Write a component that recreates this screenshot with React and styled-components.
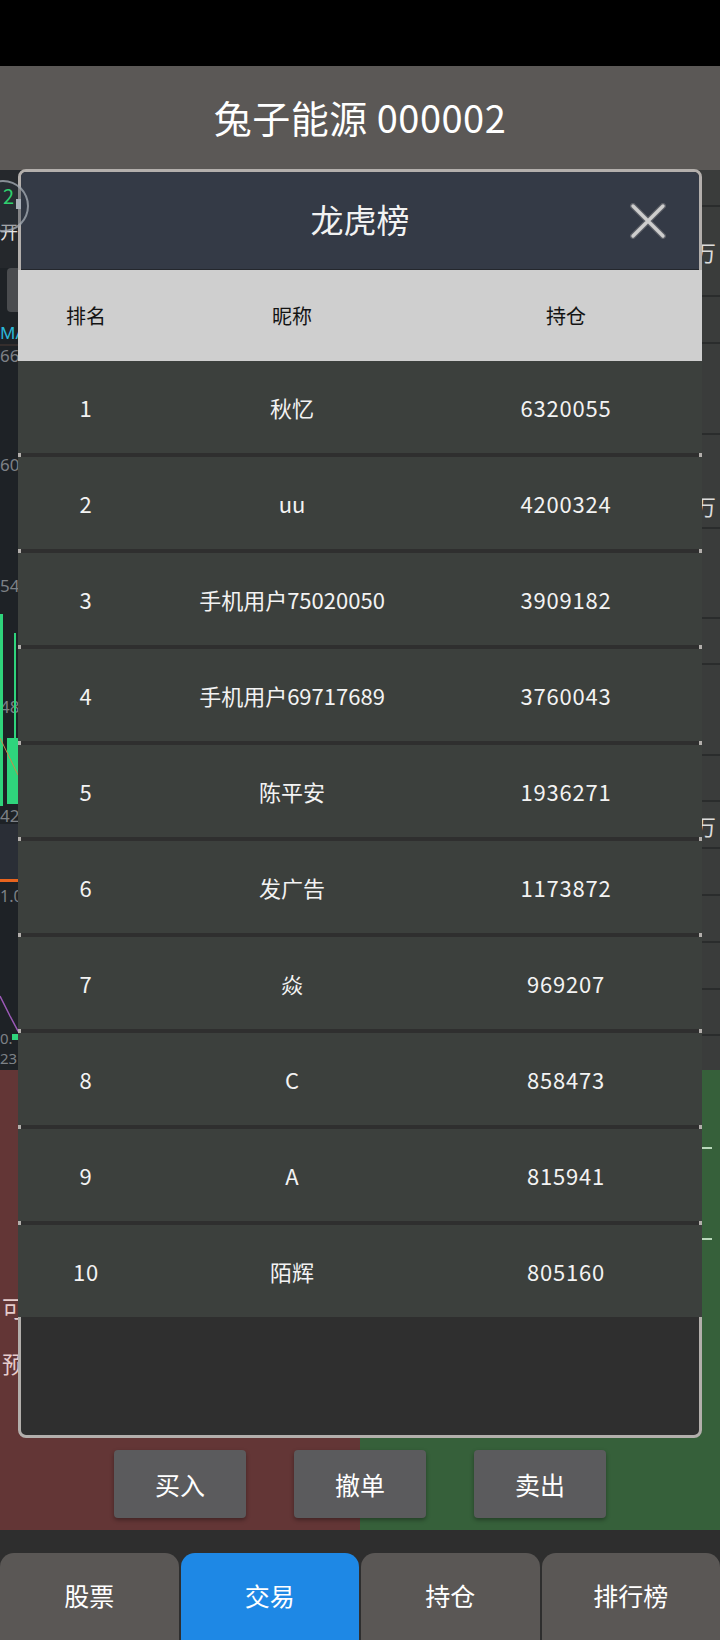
import React from "react";
import styled, { createGlobalStyle } from "styled-components";

const Global = createGlobalStyle`
  html, body { margin: 0; padding: 0; background: #000; }
  body { font-family: "Noto Sans CJK SC", "Noto Sans", sans-serif; }
  * { box-sizing: border-box; }
`;

const Page = styled.div`
  position: relative;
  width: 720px;
  height: 1640px;
  overflow: hidden;
  display: flex;
  flex-direction: column;
  background: #2e2e2e;
`;

const StatusBar = styled.div`
  height: 66px;
  background: #000;
  flex: none;
`;

const TitleBar = styled.div`
  height: 104px;
  flex: none;
  background: #5b5856;
  color: #fff;
  font-size: 38px;
  display: flex;
  align-items: center;
  justify-content: center;
  letter-spacing: 0.5px;
  padding-bottom: 3px;
`;

const Market = styled.div`
  height: 900px;
  flex: none;
  display: flex;
`;

const ChartPanel = styled.div`
  flex: 1;
  background: #1e2226;
  display: flex;
  flex-direction: column;
`;

const ToolRow = styled.div`
  height: 98px;
  background: #25282c;
  display: flex;
  flex-direction: column;
  padding: 50px 0 0 0;
`;

/* floating assistive button that sits above everything */
const FloatBadge = styled.div`
  position: absolute;
  z-index: 5;
  left: -23px;
  top: 180px;
  width: 52px;
  height: 52px;
  border-radius: 50%;
  border: 2px solid rgba(170, 176, 184, 0.75);
  background: rgba(44, 52, 64, 0.35);
  display: flex;
  align-items: flex-start;
  padding: 3px 0 0 24px;
  color: #2fd06f;
  font-size: 20px;
  line-height: 22px;
`;

const BadgeBars = styled.span`
  display: inline-block;
  width: 5px;
  height: 10px;
  background: #aab0b8;
  margin: 14px 0 0 2px;
`;

const OpenLabel = styled.div`
  color: #e4e4e4;
  font-size: 18px;
  line-height: 22px;
`;

const PeriodRow = styled.div`
  height: 52px;
  padding: 0 0 8px 7px;
  display: flex;
  align-items: flex-end;
`;

const PeriodBtn = styled.div`
  width: 40px;
  height: 44px;
  border-radius: 4px;
  background: #4a4c4f;
`;

const ChartSvg = styled.svg`
  display: block;
  flex: 1;
  width: 100%;
`;

const QuoteList = styled.div`
  width: 300px;
  background: #3a3c3b;
  display: flex;
  flex-direction: column;
`;

const QuoteRow = styled.div`
  flex: none;
  height: ${(p) => p.$h}px;
  border-bottom: ${(p) => (p.$line ? "2px solid #2a2c2c" : "none")};
  display: flex;
  align-items: center;
  justify-content: flex-end;
  padding-right: 4px;
  color: #dcdcdc;
  font-size: 22px;
`;

const TradePanel = styled.div`
  height: 460px;
  flex: none;
  background: linear-gradient(to right, #633636 50%, #36603a 50%);
  display: flex;
  flex-direction: column;
`;

const TradeForm = styled.div`
  flex: 1;
  display: grid;
  grid-template-columns: 1fr 1fr;
`;

const FormCol = styled.div`
  display: flex;
  flex-direction: column;
  align-items: ${(p) => (p.$right ? "flex-end" : "flex-start")};
  padding-top: ${(p) => p.$top}px;
  padding-right: ${(p) => (p.$right ? 8 : 0)}px;
  padding-left: ${(p) => (p.$right ? 0 : 2)}px;
`;

const FormLabel = styled.div`
  height: 56px;
  line-height: 56px;
  color: #e6cccc;
  font-size: 23px;
  white-space: nowrap;
`;

const DashSlot = styled.div`
  height: 91px;
  display: flex;
  align-items: center;
`;

const Dash = styled.span`
  width: 10px;
  height: 2px;
  background: #b9d8bb;
`;

const ButtonRow = styled.div`
  display: flex;
  justify-content: center;
  gap: 48px;
  padding-bottom: 12px;
`;

const ActionBtn = styled.button`
  width: 132px;
  height: 68px;
  border: none;
  border-radius: 4px;
  background: #5b5b5d;
  color: #fff;
  font-family: inherit;
  font-size: 25px;
  box-shadow: 0 2px 4px rgba(0, 0, 0, 0.35);
`;

const NavGap = styled.div`
  height: 23px;
  flex: none;
  background: #2e2e2e;
`;

const TabBar = styled.nav`
  height: 87px;
  flex: none;
  display: flex;
  gap: 2px;
  background: #2e2e2e;
`;

const Tab = styled.div`
  flex: 1;
  border-radius: 14px 14px 0 0;
  background: ${(p) => (p.$active ? "#1e88e5" : "#5a5755")};
  color: #fff;
  font-size: 25px;
  display: flex;
  align-items: center;
  justify-content: center;
  padding-bottom: 3px;
`;

/* ---------- dialog ---------- */

const Dialog = styled.div`
  position: absolute;
  top: 169px;
  left: 18px;
  width: 684px;
  height: 1269px;
  border: 3px solid #b3afac;
  border-radius: 8px;
  background: #2f2f2f;
  display: flex;
  flex-direction: column;
`;

const DialogHeader = styled.div`
  height: 98px;
  flex: none;
  background: #343a46;
  border-radius: 5px 5px 0 0;
  border-bottom: 1px solid #24272d;
  display: grid;
  grid-template-columns: 1fr auto 1fr;
  align-items: center;
`;

const DialogTitle = styled.div`
  grid-column: 2;
  color: #f2f2f2;
  font-size: 33px;
  margin-top: -3px;
`;

const CloseBtn = styled.div`
  grid-column: 3;
  justify-self: end;
  margin-right: 33px;
  width: 36px;
  height: 36px;
  display: flex;
`;

const Table = styled.div`
  margin: 0 -3px;
  display: flex;
  flex-direction: column;
  gap: 4px;
`;

const Row = styled.div`
  height: ${(p) => (p.$head ? 91 : 92)}px;
  background: ${(p) => (p.$head ? "#cfcfcf" : "#3c403d")};
  color: ${(p) => (p.$head ? "#141414" : "#f3f3f3")};
  font-size: ${(p) => (p.$head ? 20 : 22)}px;
  display: grid;
  grid-template-columns: 136px 276px 1fr;
  align-items: center;
  margin-bottom: ${(p) => (p.$head ? -4 : 0)}px;
`;

const Cell = styled.div`
  text-align: center;
  white-space: nowrap;
  letter-spacing: ${(p) => (p.$num ? 0.8 : 0)}px;
`;

const rows = [
  ["1", "秋忆", "6320055"],
  ["2", "uu", "4200324"],
  ["3", "手机用户75020050", "3909182"],
  ["4", "手机用户69717689", "3760043"],
  ["5", "陈平安", "1936271"],
  ["6", "发广告", "1173872"],
  ["7", "焱", "969207"],
  ["8", "C", "858473"],
  ["9", "A", "815941"],
  ["10", "陌辉", "805160"],
];

const quoteRows = [
  { h: 37, line: true },
  { h: 90, line: true, label: "万" },
  { h: 47, line: true },
  { h: 91, line: true },
  { h: 47, line: false },
  { h: 47, line: true, label: "万" },
  { h: 90, line: true },
  { h: 46, line: true },
  { h: 91, line: true },
  { h: 46, line: true },
  { h: 47, line: true, label: "万" },
  { h: 47, line: true },
  { h: 47, line: true },
  { h: 47, line: true },
  { h: 46, line: true },
];

function Chart() {
  return (
    <ChartSvg viewBox="0 0 420 750" preserveAspectRatio="none">
      <rect x="0" y="0" width="420" height="750" fill="#1e2226" />
      <text x="0" y="19" fill="#2bb7d8" fontSize="17" fontFamily="Noto Sans">MA5</text>
      <line x1="0" y1="25" x2="420" y2="25" stroke="#4d3a34" strokeWidth="1" />
      <g fill="#7d8186" fontSize="17" fontFamily="Noto Sans">
        <text x="0" y="42">66.00</text>
        <text x="0" y="151">60.00</text>
        <text x="0" y="272">54.00</text>
        <text x="0" y="393">48.00</text>
        <text x="0" y="502">42.00</text>
      </g>
      <rect x="0" y="294" width="3" height="192" fill="#2fd47c" />
      <rect x="14" y="313" width="2" height="109" fill="#2fd47c" />
      <rect x="7" y="418" width="12" height="66" fill="#2fd47c" />
      <line x1="0" y1="418" x2="18" y2="455" stroke="#c98a4a" strokeWidth="1" />
      <rect x="0" y="504" width="420" height="56" fill="#2a2e36" />
      <rect x="0" y="559" width="420" height="3" fill="#e8641e" />
      <text x="0" y="582" fill="#7d8186" fontSize="16" fontFamily="Noto Sans">1.00</text>
      <polyline points="0,676 10,696 18,711 40,711" fill="none" stroke="#9b59b6" strokeWidth="1.5" />
      <text x="0" y="724" fill="#7d8186" fontSize="15" fontFamily="Noto Sans">0.</text>
      <rect x="12" y="714" width="6" height="6" fill="#2fd47c" />
      <text x="0" y="744" fill="#7d8186" fontSize="15" fontFamily="Noto Sans">23</text>
    </ChartSvg>
  );
}

function CloseIcon() {
  return (
    <svg width="36" height="36" viewBox="0 0 36 36">
      <g strokeLinecap="round">
        <path d="M3 3 L33 33 M33 3 L3 33" stroke="#5d6068" strokeWidth="6" />
        <path d="M3 3 L33 33 M33 3 L3 33" stroke="#cdcdcd" strokeWidth="3.4" />
      </g>
    </svg>
  );
}

export default function App() {
  return (
    <>
      <Global />
      <Page>
        <StatusBar />
        <TitleBar>兔子能源 000002</TitleBar>
        <Market>
          <ChartPanel>
            <ToolRow>
              <OpenLabel>开盘</OpenLabel>
            </ToolRow>
            <PeriodRow>
              <PeriodBtn />
            </PeriodRow>
            <Chart />
          </ChartPanel>
          <QuoteList>
            {quoteRows.map((q, i) => (
              <QuoteRow key={i} $h={q.h} $line={q.line}>
                {q.label || ""}
              </QuoteRow>
            ))}
          </QuoteList>
        </Market>
        <TradePanel>
          <TradeForm>
            <FormCol $top={209}>
              <FormLabel>可用资金</FormLabel>
              <FormLabel>预计金额</FormLabel>
            </FormCol>
            <FormCol $right $top={32}>
              <DashSlot>
                <Dash />
              </DashSlot>
              <DashSlot>
                <Dash />
              </DashSlot>
            </FormCol>
          </TradeForm>
          <ButtonRow>
            <ActionBtn>买入</ActionBtn>
            <ActionBtn>撤单</ActionBtn>
            <ActionBtn>卖出</ActionBtn>
          </ButtonRow>
        </TradePanel>
        <NavGap />
        <TabBar>
          <Tab>股票</Tab>
          <Tab $active>交易</Tab>
          <Tab>持仓</Tab>
          <Tab>排行榜</Tab>
        </TabBar>

        <Dialog>
          <DialogHeader>
            <DialogTitle>龙虎榜</DialogTitle>
            <CloseBtn>
              <CloseIcon />
            </CloseBtn>
          </DialogHeader>
          <Table>
            <Row $head>
              <Cell>排名</Cell>
              <Cell>昵称</Cell>
              <Cell>持仓</Cell>
            </Row>
            {rows.map(([rank, name, amount]) => (
              <Row key={rank}>
                <Cell $num>{rank}</Cell>
                <Cell>{name}</Cell>
                <Cell $num>{amount}</Cell>
              </Row>
            ))}
          </Table>
        </Dialog>

        <FloatBadge>
          2<BadgeBars />
        </FloatBadge>
      </Page>
    </>
  );
}
